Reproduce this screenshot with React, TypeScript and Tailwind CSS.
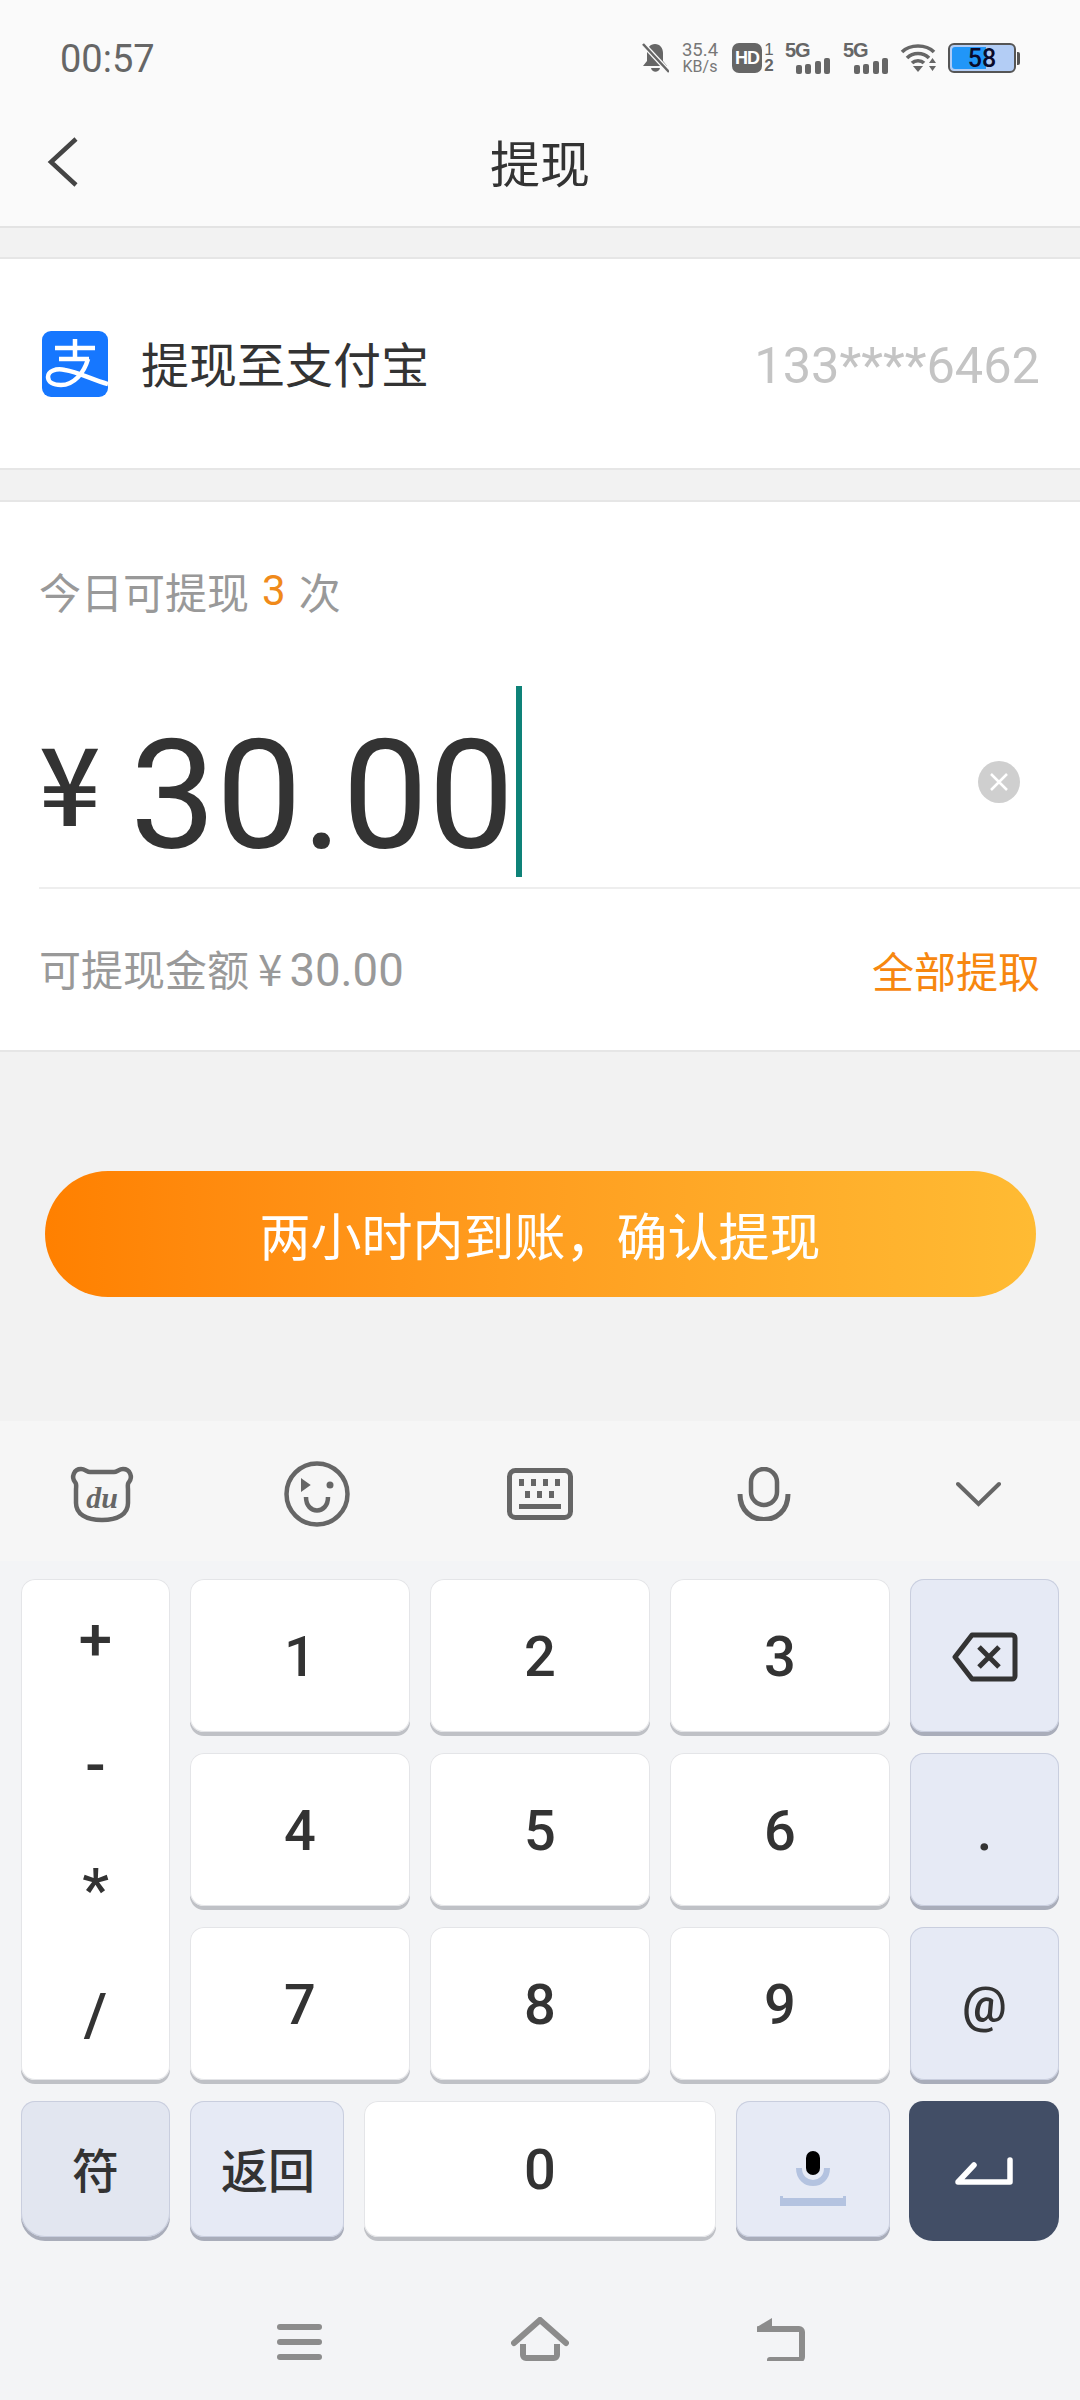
import React from "react";

const cjk = "font-['Noto_Sans_CJK_SC','Noto_Sans',sans-serif]";
const roboto = "font-['Roboto',sans-serif]";
const arial = "font-['Liberation_Sans',sans-serif]";

function Signal({ className }: { className: string }) {
  return (
    <div className={`flex h-[32px] w-[45px] flex-col justify-between ${className}`}>
      <div className={`h-[16px] text-[20px] leading-[16px] font-bold tracking-[-1px] ${arial}`}>5G</div>
      <div className="flex h-[16px] items-end justify-end gap-[3.500px]">
        <div className="h-[9px] w-[6px] rounded-[2px] bg-[#666]" />
        <div className="h-[10px] w-[6px] rounded-[2px] bg-[#666]" />
        <div className="h-[13px] w-[6px] rounded-[2px] bg-[#666]" />
        <div className="h-[16px] w-[6px] rounded-[2px] bg-[#666]" />
      </div>
    </div>
  );
}

function StatusIcons() {
  return (
    <div className="flex items-center text-[#666]">
      <svg width="27" height="30" viewBox="0 0 27 30">
        <path d="M13 1C8 1 5 5 5 10v8l-4 5h24l-4-5v-8c0-5-3-9-8-9zM9 25c1 5 8 5 9 0z" fill="#666" />
        <path d="M1 1l26 28" stroke="#fafafa" strokeWidth="5" />
        <path d="M1 1l26 28" stroke="#666" strokeWidth="2.500" />
      </svg>
      <div className={`ml-[12px] w-[38px] text-center text-[#777] ${roboto}`}>
        <div className="text-[18.500px] leading-[17px]">35.4</div>
        <div className="text-[16px] leading-[15px]">KB/s</div>
      </div>
      <div className={`ml-[13px] flex h-[30px] w-[30px] items-center justify-center rounded-[7px] bg-[#666] text-[18px] leading-none font-bold tracking-[-1px] text-white ${arial}`}>
        HD
      </div>
      <div className={`ml-[1px] w-[12px] text-center text-[17px] leading-[16px] font-bold ${arial}`}>
        <div className="font-normal">1</div>
        <div>2</div>
      </div>
      <Signal className="ml-[10px]" />
      <Signal className="ml-[13px]" />
      <svg width="37" height="28" viewBox="0 0 37 28" className="ml-[12px]">
        <path d="M2 8c8-8 24-8 32 0M7 14c6-6 16-6 22 0M12 19c3-3 9-3 12 0" fill="none" stroke="#666" strokeWidth="3.600" />
        <path d="M13 22h10l-5 6z" fill="#666" />
        <path d="M29 19l3.500-5 3.500 5zM29 22l3.500 5 3.500-5z" fill="#666" />
      </svg>
      <div className="ml-[11px] flex items-center">
        <div className="relative h-[30px] w-[68px] overflow-hidden rounded-[6px] border-2 border-[#555] bg-[#b3cdf5] p-[2px]">
          <div className="h-full w-[57%] rounded-l-[3px] bg-[#2196f8]" />
          <div className={`absolute inset-0 flex items-center justify-center text-[25px] leading-none font-medium text-[#0a0a2a] ${roboto}`}>
            58
          </div>
        </div>
        <div className="ml-[1px] h-[13px] w-[3px] rounded-r-[2px] bg-[#555]" />
      </div>
    </div>
  );
}

function AlipayLogo() {
  return (
    <svg width="66" height="66" viewBox="0 0 66 66">
      <rect width="66" height="66" rx="9" fill="#1677ff" />
      <path d="M13 17h40M33 8v21M17 28h30" stroke="#fff" strokeWidth="4.500" fill="none" />
      <path d="M46 28c-4 14-14 26-27 26c-8 0-13-3-13-8c0-6 8-9 17-7c13 2 28 10 43 14" stroke="#fff" strokeWidth="4.500" fill="none" />
    </svg>
  );
}

function ToolbarIcons() {
  return (
    <div className="flex h-[140px] items-center bg-[#f6f6f6] pt-[6px] pl-[69px]">
      <svg width="66" height="57" viewBox="0 0 66 57" className="shrink-0">
        <path d="M12 3c-7 0-10 8-6 13c2 2 1 4 1 8v13c0 11 10 17 26 17s26-6 26-17V24c0-4-1-6 1-8c4-5 1-13-6-13c-4 0-6 3-9 3H21c-3 0-5-3-9-3z" fill="none" stroke="#666" strokeWidth="4.500" />
        <text x="33" y="42" textAnchor="middle" fontSize="30" fontStyle="italic" fontWeight="700" fontFamily="'Liberation Serif',serif" fill="#666">du</text>
      </svg>
      <svg width="66" height="66" viewBox="0 0 66 66" className="ml-[149px] shrink-0">
        <circle cx="33" cy="33" r="30.500" fill="none" stroke="#666" strokeWidth="4.500" />
        <path d="M18 19l7 5-7 5z" fill="#666" stroke="#666" strokeWidth="2" />
        <circle cx="46" cy="24" r="3.500" fill="#666" />
        <path d="M22 36c0 18 22 18 22 0" fill="none" stroke="#666" strokeWidth="4.500" />
      </svg>
      <svg width="66" height="52" viewBox="0 0 66 52" className="ml-[157px] shrink-0">
        <rect x="2.500" y="2.500" width="61" height="47" rx="6" fill="none" stroke="#666" strokeWidth="5" />
        <path d="M12 11h5v7h-5zM24 11h5v7h-5zM36 11h5v7h-5zM48 11h5v7h-5zM18 23h5v7h-5zM30 23h5v7h-5zM42 23h5v7h-5zM12 36h42v5H12z" fill="#666" />
      </svg>
      <svg width="54" height="54" viewBox="0 0 54 54" className="ml-[164px] shrink-0">
        <rect x="14" y="2" width="26" height="36" rx="13" fill="none" stroke="#666" strokeWidth="4.500" />
        <path d="M3 27c0 34 48 34 48 0" fill="none" stroke="#666" strokeWidth="5" />
      </svg>
      <svg width="45" height="26" viewBox="0 0 45 26" className="ml-[165px] shrink-0">
        <path d="M2 3l20.500 20L43 3" fill="none" stroke="#666" strokeWidth="4" strokeLinecap="round" />
      </svg>
    </div>
  );
}

const keyWhite = "bg-white shadow-[0_4px_0_#bfc1c6,inset_0_0_0_1px_#e4e5e8]";
const keyBlue = "bg-[#e6eaf5] shadow-[0_4px_0_#a9adba,inset_0_0_0_1px_#c9cede]";

function Key({ label, className }: { label: React.ReactNode; className: string }) {
  return (
    <div className={`flex h-[153px] items-center justify-center rounded-[14px] pt-[2px] text-[56px] leading-none font-medium text-[#333] ${roboto} ${className}`}>
      {label}
    </div>
  );
}

export default function App() {
  return (
    <div className={`flex h-[2400px] w-[1080px] flex-col overflow-hidden bg-[#f2f2f2] ${cjk}`}>
      {/* status bar + title */}
      <div className="h-[228px] shrink-0 border-b-2 border-[#e3e3e3] bg-[#fafafa]">
        <div className="flex h-[116px] items-center justify-between pr-[60px] pl-[60px]">
          <span className={`pt-[2px] text-[38px] leading-none text-[#666] ${roboto}`}>00:57</span>
          <StatusIcons />
        </div>
        <div className="relative flex h-[110px] items-center justify-center pb-[20px]">
          <svg width="32" height="52" viewBox="0 0 32 52" className="absolute top-[20px] left-[47px]">
            <path d="M29 3L4 26l25 23" fill="none" stroke="#444" strokeWidth="4.500" />
          </svg>
          <span className="text-[50px] leading-none text-[#333]">提现</span>
        </div>
      </div>

      {/* account row */}
      <div className="mt-[29px] flex h-[213px] shrink-0 items-center justify-between border-y-2 border-[#e6e6e6] bg-white pr-[40px] pl-[42px]">
        <div className="flex items-center">
          <AlipayLogo />
          <span className="ml-[33px] pb-[4px] text-[48px] leading-none text-[#333]">提现至支付宝</span>
        </div>
        <span className={`pt-[6px] text-[50.500px] leading-none text-[#c4c4c4] ${roboto}`}>133****6462</span>
      </div>

      {/* amount */}
      <div className="mt-[30px] h-[552px] shrink-0 border-y-2 border-[#e6e6e6] bg-white pl-[39px]">
        <div className="flex h-[178px] items-center text-[42px] leading-none text-[#999]">
          今日可提现<span className={`mx-[13px] text-[#f08a1a] ${roboto}`}>3</span>次
        </div>
        <div className="relative flex h-[209px] items-end border-b-2 border-[#eeeeee]">
          <span className={`mb-[54px] w-[60px] text-[108px] leading-none font-medium text-[#333] ${cjk}`}>¥</span>
          <span className={`mb-[15px] ml-[31px] text-[153px] leading-none text-[#333] ${roboto}`}>30.00</span>
          <div className="mb-[10px] ml-[2px] h-[191px] w-[6px] bg-[#0e8278]" />
          <div className="absolute top-[81px] right-[60px] flex h-[42px] w-[42px] items-center justify-center rounded-full bg-[#cfcfcf]">
            <svg width="22" height="22" viewBox="0 0 22 22">
              <path d="M3 3l16 16M19 3L3 19" stroke="#fff" strokeWidth="2.500" />
            </svg>
          </div>
        </div>
        <div className="flex h-[158px] items-center justify-between pt-[3px] pr-[40px]">
          <span className="flex items-baseline text-[42px] leading-none text-[#999]">
            可提现金额
            <span className={`ml-[9px] text-[44px] ${cjk}`}>¥</span>
            <span className={`ml-[7px] text-[45.500px] ${roboto}`}>30.00</span>
          </span>
          <span className="text-[42px] leading-none text-[#f7870f]">全部提取</span>
        </div>
      </div>

      {/* confirm */}
      <div className="flex h-[369px] shrink-0 justify-center pt-[119px]">
        <div className="flex h-[126px] w-[991px] items-center justify-center rounded-full bg-gradient-to-r from-[#ff8000] to-[#ffbb33] text-[51px] leading-none text-white">
          两小时内到账，确认提现
        </div>
      </div>

      {/* keyboard */}
      <ToolbarIcons />
      <div className="flex-1 bg-[#f3f4f6] pt-[18px] pl-[21px]">
        <div className="flex gap-[20px]">
          <div className={`flex h-[501px] w-[149px] shrink-0 flex-col items-center justify-between rounded-[14px] pt-[34px] pb-[38px] text-[60px] leading-[54px] font-medium text-[#333] ${roboto} ${keyWhite}`}>
            <span>+</span>
            <span>-</span>
            <span>*</span>
            <span>/</span>
          </div>
          <div className="grid grid-cols-[220px_220px_220px_149px] gap-x-[20px] gap-y-[21px]">
            <Key label="1" className={keyWhite} />
            <Key label="2" className={keyWhite} />
            <Key label="3" className={keyWhite} />
            <Key
              className={keyBlue}
              label={
                <svg width="66" height="50" viewBox="0 0 66 50">
                  <path d="M20 3h40a3 3 0 0 1 3 3v38a3 3 0 0 1-3 3H20L3 25z" fill="none" stroke="#333" strokeWidth="5" strokeLinejoin="round" />
                  <path d="M27 15l20 20M47 15L27 35" stroke="#333" strokeWidth="5" />
                </svg>
              }
            />
            <Key label="4" className={keyWhite} />
            <Key label="5" className={keyWhite} />
            <Key label="6" className={keyWhite} />
            <Key label="." className={keyBlue} />
            <Key label="7" className={keyWhite} />
            <Key label="8" className={keyWhite} />
            <Key label="9" className={keyWhite} />
            <Key label={<span className="text-[50px]">@</span>} className={keyBlue} />
          </div>
        </div>
        <div className="mt-[21px] flex gap-[20px]">
          <div className="flex h-[136px] w-[149px] items-center justify-center rounded-[14px] rounded-b-[24px] bg-[#e2e6f0] pb-[3px] text-[47px] leading-none font-medium text-[#333] shadow-[0_4px_0_#a9adba,inset_0_0_0_1px_#c9cede]">符</div>
          <div className={`flex h-[136px] w-[154px] items-center justify-center rounded-[14px] pb-[3px] pl-[2px] text-[47px] leading-none font-medium text-[#333] ${keyBlue}`}>返回</div>
          <div className={`flex h-[136px] w-[352px] items-center justify-center rounded-[14px] pt-[2px] text-[56px] leading-none font-medium text-[#333] ${roboto} ${keyWhite}`}>0</div>
          <div className={`flex h-[136px] w-[154px] items-center justify-center rounded-[14px] pt-[18px] ${keyBlue}`}>
            <svg width="66" height="55" viewBox="0 0 66 55">
              <path d="M19 17c0 20 28 20 28 0" fill="none" stroke="#b4c3e0" strokeWidth="6" />
              <rect x="26" y="0" width="14" height="24" rx="7" fill="#000" />
              <path d="M0 45h3v2h60v-2h3v10H0z" fill="#b4c3e0" />
            </svg>
          </div>
          <div className="-ml-[1px] flex h-[140px] w-[150px] items-center justify-center rounded-[14px] rounded-b-[24px] bg-[#424e66]">
            <svg width="58" height="28" viewBox="0 0 58 28">
              <path d="M55 3v22H3L19 8" fill="none" stroke="#fff" strokeWidth="5.500" strokeLinejoin="round" strokeLinecap="round" />
            </svg>
          </div>
        </div>
        {/* nav bar */}
        <div className="mt-[76px] flex items-end pl-[256px]">
          <div className="mb-[1px] flex w-[45px] flex-col gap-[9px]">
            <div className="h-[6px] rounded-[3px] bg-[#8c8c8c]" />
            <div className="h-[6px] rounded-[3px] bg-[#8c8c8c]" />
            <div className="h-[6px] rounded-[3px] bg-[#8c8c8c]" />
          </div>
          <svg width="58" height="44" viewBox="0 0 58 44" className="ml-[189px]">
            <path d="M3 26L29 3l26 23" fill="none" stroke="#8c8c8c" strokeWidth="6" strokeLinecap="round" />
            <path d="M12 27v11a3 3 0 0 0 3 3h28a3 3 0 0 0 3-3V27" fill="none" stroke="#8c8c8c" strokeWidth="6" />
          </svg>
          <svg width="48" height="43" viewBox="0 0 48 43" className="ml-[188px]">
            <path d="M2 11h40a3 3 0 0 1 3 3v25a3 3 0 0 1-3 3H13" fill="none" stroke="#8c8c8c" strokeWidth="6" strokeLinecap="round" />
            <path d="M15 0L0 9v5h15z" fill="#8c8c8c" />
          </svg>
        </div>
      </div>
    </div>
  );
}
